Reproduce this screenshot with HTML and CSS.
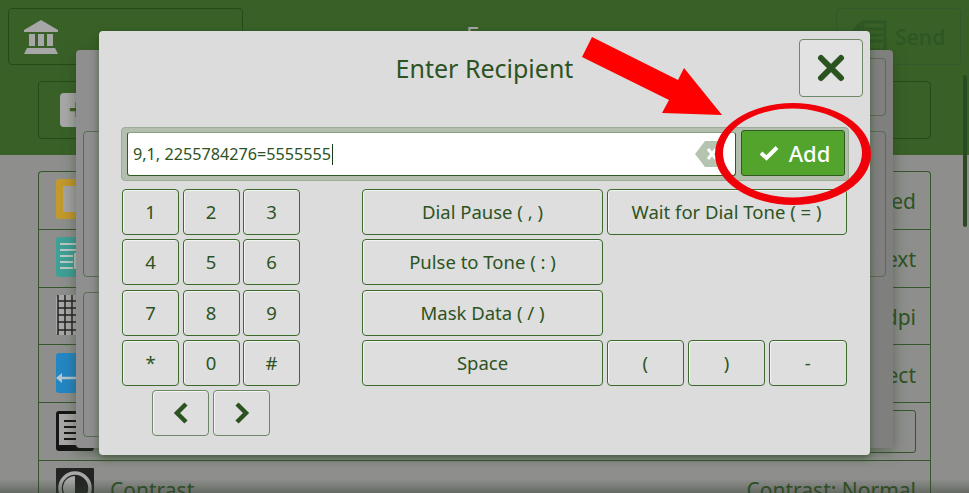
FILE: index.html
```html
<!DOCTYPE html>
<html lang="en">
<head>
  <meta charset="UTF-8">
  <meta name="viewport" content="width=device-width, initial-scale=1.0">
  <title>Enter Recipient</title>
  <link rel="stylesheet" href="styles.css">
</head>
<body>
  <div class="screen">
    <!-- dimmed page behind the dialogs -->
    <div class="top-area">
      <div class="top-row">
        <div class="top-btn">
          <svg class="bank-icon" viewBox="0 0 34 34" width="34" height="34">
            <path d="M17 0 L34 10 V12 H0 V10 Z" fill="#a7a7a7"/>
            <rect x="5" y="14" width="6" height="12" fill="#a7a7a7"/>
            <rect x="14" y="14" width="6" height="12" fill="#a7a7a7"/>
            <rect x="23" y="14" width="6" height="12" fill="#a7a7a7"/>
            <path d="M3 28 H31 L34 34 H0 Z" fill="#a7a7a7"/>
          </svg>
        </div>
        <span class="top-title">F</span>
        <div class="send-btn">
          <svg class="send-icon" viewBox="0 0 36 36" width="36" height="36">
            <path d="M0 12 L10 2 V26 H0 Z" fill="#2f5724"/>
            <rect x="12" y="3" width="22" height="28" fill="none" stroke="#2f5724" stroke-width="3"/>
            <path d="M14 10 H32 M14 16 H32 M14 22 H32" stroke="#2f5724" stroke-width="3"/>
          </svg>
          <span>Send</span>
        </div>
      </div>
      <div class="add-row">
        <div class="plus-tile">+</div>
      </div>
    </div>

    <div class="list">
      <div class="list-row">
        <svg class="tile" viewBox="0 0 40 42"><rect x="1" y="1" width="38" height="40" rx="3" fill="#c3982c"/><rect x="8" y="8" width="30" height="26" fill="#a3a3a3"/></svg>
        <span class="value">ed</span>
      </div>
      <div class="list-row">
        <svg class="tile" viewBox="0 0 40 42"><rect x="1" y="1" width="38" height="40" rx="3" fill="#3fa097"/><path d="M5 8 H30 M5 14 H30 M5 20 H18 M5 26 H18 M5 32 H18" stroke="#b9c9c5" stroke-width="2"/><rect x="20" y="18" width="12" height="14" fill="none" stroke="#b9c9c5" stroke-width="2"/></svg>
        <span class="value">ext</span>
      </div>
      <div class="list-row">
        <svg class="tile" viewBox="0 0 40 42"><rect x="1" y="1" width="38" height="40" rx="3" fill="#a9a9a9"/><path d="M3 7 H40 M3 14 H40 M3 21 H40 M3 28 H40 M3 36 H40 M3 1 V41 M10 1 V41 M17 1 V41" stroke="#222" stroke-width="1.5"/></svg>
        <span class="value">dpi</span>
      </div>
      <div class="list-row">
        <svg class="tile" viewBox="0 0 40 42"><rect x="1" y="1" width="38" height="40" rx="3" fill="#2586c4"/><path d="M6 26 H38" stroke="#b7c6cf" stroke-width="2.5"/><path d="M1 26 L7 21 V31 Z" fill="#b7c6cf"/></svg>
        <span class="value">ect</span>
      </div>
      <div class="list-row">
        <svg class="tile" viewBox="0 0 40 42"><rect x="1" y="1" width="38" height="40" rx="3" fill="#151515"/><rect x="4" y="4" width="32" height="31" fill="#a6a6a6"/><path d="M9 11 H24 M9 17 H24 M9 23 H24 M9 29 H24" stroke="#151515" stroke-width="2"/></svg>
        <div class="row-box"></div>
      </div>
      <div class="list-row">
        <svg class="tile" viewBox="0 0 40 42"><rect x="1" y="1" width="38" height="40" rx="1" fill="#232323"/><circle cx="20" cy="21" r="15" fill="none" stroke="#a8a8a8" stroke-width="3.5"/><path d="M20 9 A12 12 0 0 0 20 33 Z" fill="#a8a8a8"/></svg>
        <span class="label">Contrast</span>
        <span class="value">Contrast: Normal</span>
      </div>
    </div>

    <div class="scroll-thumb"></div>
    <div class="bottom-shade"></div>

    <div class="back-dialog">
      <div class="back-top"><div class="back-box back-small"></div></div>
      <div class="back-cols">
        <div class="back-box"></div>
        <div class="back-box"></div>
      </div>
      <div class="back-box back-left"></div>
    </div>

    <div class="dialog">
      <div class="dialog-head">
        <span></span>
        <h1>Enter Recipient</h1>
        <button class="close-btn">
          <svg viewBox="0 0 28 28" width="28" height="28">
            <path d="M4 4 L24 24 M24 4 L4 24" stroke="#2a5320" stroke-width="6" stroke-linecap="round"/>
          </svg>
        </button>
      </div>

      <div class="entry">
        <div class="entry-input">
          <span class="entry-text">9,1, 2255784276=5555555</span>
          <svg class="clear-icon" viewBox="0 0 28 26" width="28" height="26">
            <path d="M10 0 H28 V26 H10 L0 13 Z" fill="#b4c4b1"/>
            <path d="M13 8 L21 18 M21 8 L13 18" stroke="#fff" stroke-width="3"/>
          </svg>
        </div>
        <button class="add-btn">
          <svg viewBox="0 0 20 16" width="20" height="16">
            <path d="M2 8 L7.5 13 L18 2.5" fill="none" stroke="#fff" stroke-width="4"/>
          </svg>
          Add
        </button>
      </div>

      <div class="pads">
        <div class="keypad">
          <button class="key">1</button>
          <button class="key">2</button>
          <button class="key">3</button>
          <button class="key">4</button>
          <button class="key">5</button>
          <button class="key">6</button>
          <button class="key">7</button>
          <button class="key">8</button>
          <button class="key">9</button>
          <button class="key">*</button>
          <button class="key">0</button>
          <button class="key">#</button>
          <div class="cursor-keys">
            <button class="key key-nav">
              <svg viewBox="0 0 18 24" width="18" height="24"><path d="M14 3 L5 12 L14 21" fill="none" stroke="#2a5320" stroke-width="4.5"/></svg>
            </button>
            <button class="key key-nav">
              <svg viewBox="0 0 18 24" width="18" height="24"><path d="M4 3 L13 12 L4 21" fill="none" stroke="#2a5320" stroke-width="4.5"/></svg>
            </button>
          </div>
        </div>

        <div class="symbols">
          <button class="key">Dial Pause ( , )</button>
          <button class="key span-3">Wait for Dial Tone ( = )</button>
          <button class="key row-start">Pulse to Tone ( : )</button>
          <button class="key row-start">Mask Data ( / )</button>
          <button class="key row-start">Space</button>
          <button class="key">(</button>
          <button class="key">)</button>
          <button class="key">-</button>
        </div>
      </div>
    </div>

    <!-- red annotation drawn over the screenshot -->
    <svg class="markup" viewBox="0 0 969 493" width="969" height="493">
      <polygon points="592,37 582,57 669,100 662,113 722,115 684,68 678,80" fill="#ff0000"/>
      <path d="M715 154 A78 51 0 1 0 871 154 A78 51 0 1 0 715 154 Z M723 153 A69.5 44.5 0 1 1 862 153 A69.5 44.5 0 1 1 723 153 Z" fill="#f00008" fill-rule="evenodd"/>
    </svg>
  </div>
</body>
</html>
```

FILE: styles.css
```css
* { box-sizing: border-box; }
html, body { margin: 0; padding: 0; }
body { font-family: "Noto Sans", "Liberation Sans", sans-serif; background: #8e8f8d; }
.screen { position: relative; width: 969px; height: 493px; overflow: hidden; background: #8e8f8d; color: #2d5323; }

.top-area { height: 155px; padding: 8px; background: #396127; }
.top-row { display: flex; height: 57px; }
.top-btn { display: flex; align-items: center; width: 235px; padding-left: 15px; border: 1px solid #244a18; border-radius: 4px; }
.top-title { margin-left: 223px; padding-top: 13px; font-size: 24px; line-height: 28px; color: #a7a7a7; }
.send-btn { display: flex; align-items: center; gap: 8px; width: 125px; margin-left: auto; padding-left: 14px; border: 1px solid #33592a; border-radius: 4px; font-size: 21px; font-weight: 600; color: #2f5724; }
.add-row { display: flex; align-items: center; width: 893px; height: 58px; margin: 16px 0 0 30px; padding-left: 21px; border: 1px solid #244a18; border-radius: 4px; }
.plus-tile { width: 34px; height: 34px; border-radius: 4px; background: #a8a8a8; color: #396127; font-size: 30px; font-weight: 700; line-height: 32px; text-align: center; }

.list { width: 893px; margin: 16px 0 0 38px; border: 1px solid #35552c; border-bottom: 0; border-radius: 4px 4px 0 0; }
.list-row { display: flex; align-items: center; height: 57.8px; padding: 0 14px 0 16px; border-bottom: 1px solid #35552c; font-size: 21px; }
.tile { width: 40px; height: 42px; flex: none; margin-top: -2px; }
.label { margin-left: 15px; padding-top: 2px; }
.value { margin-left: auto; padding-top: 2px; }
.row-box { width: 300px; height: 43px; margin: 0 0 0 auto; border: 1px solid #35552c; border-radius: 3px; }

.scroll-thumb { position: absolute; left: 963px; top: 75px; width: 4px; height: 152px; border-radius: 2px; background: #2c4a22; }
.bottom-shade { position: absolute; left: 0; right: 0; bottom: 0; height: 14px; background: linear-gradient(rgba(50, 60, 45, 0), rgba(50, 60, 45, 0.45)); }

.back-dialog { position: absolute; left: 76px; top: 50px; width: 817px; height: 398px; padding: 8px 7px; border-radius: 4px; background: linear-gradient(90deg, #8f8f8f, #7f807e); box-shadow: 0 4px 14px rgba(40, 60, 30, 0.5); }
.back-top { display: flex; justify-content: flex-end; height: 58px; margin-bottom: 15px; }
.back-cols { display: flex; justify-content: space-between; height: 146px; margin-bottom: 15px; }
.back-box { width: 300px; border: 1px solid #5a6a54; border-radius: 4px; }
.back-small { width: 100px; height: 58px; }
.back-left { height: 145px; }

.dialog { position: absolute; left: 99px; top: 31px; width: 771px; height: 424px; padding: 8px 7px 0 22px; border-radius: 4px; background: #dcdcdc; box-shadow: 0 3px 8px rgba(40, 70, 30, 0.65); }
.dialog-head { display: grid; grid-template-columns: 49px 1fr 64px; align-items: center; height: 58px; }
.dialog-head h1 { margin: 0; font-size: 25px; font-weight: 400; text-align: center; color: #2d5323; }
.close-btn { display: flex; align-items: center; justify-content: center; width: 64px; height: 58px; padding: 0; border: 1px solid #6d8865; border-radius: 4px; background: #e2e2e2; }

.entry { display: flex; align-items: flex-end; gap: 5px; width: 728px; height: 54px; margin-top: 30px; padding: 4px 5px; border: 1px solid #9cab95; border-radius: 4px; background: #b3beae; }
.entry-input { display: flex; flex: none; align-items: center; justify-content: space-between; width: 609px; height: 44px; padding: 0 12px 0 5px; border: 1px solid #2f5a20; border-top-color: #8aa082; border-radius: 3px; background: #fff; font-size: 16.2px; color: #2d5323; }
.entry-text { padding-right: 1px; border-right: 1px solid #1f3a16; line-height: 21px; }
.add-btn { display: flex; flex: none; align-items: center; justify-content: center; gap: 10px; width: 104px; height: 46px; padding: 0 0 0 3px; border: 1px solid #2f5a20; border-radius: 3px; background: #52a42c; color: #fff; font-family: inherit; font-size: 22px; font-weight: 500; }

.pads { display: flex; gap: 62px; margin: 8px 0 0 1px; }
.keypad { display: grid; grid-template-columns: repeat(3, 57px); grid-auto-rows: 46px; gap: 4.3px 3.5px; width: 178px; }
.cursor-keys { grid-column: 1 / -1; display: flex; justify-content: center; gap: 4px; }
.symbols { display: grid; grid-template-columns: 241px repeat(3, 77.7px); grid-auto-rows: 46px; gap: 4.3px 3.5px; }
.span-3 { grid-column: span 3; }
.row-start { grid-column: 1; }

.key { display: flex; align-items: center; justify-content: center; min-width: 0; padding: 0 0 1px; border: 1px solid #3b6a2c; border-radius: 4px; background: #dedede; box-shadow: inset 1px 1px 0 #f4f4f4; color: #2d5323; font-family: inherit; font-size: 18.5px; }
.key-nav { width: 57px; border-color: #6d8865; }

.markup { position: absolute; left: 0; top: 0; pointer-events: none; }
```
